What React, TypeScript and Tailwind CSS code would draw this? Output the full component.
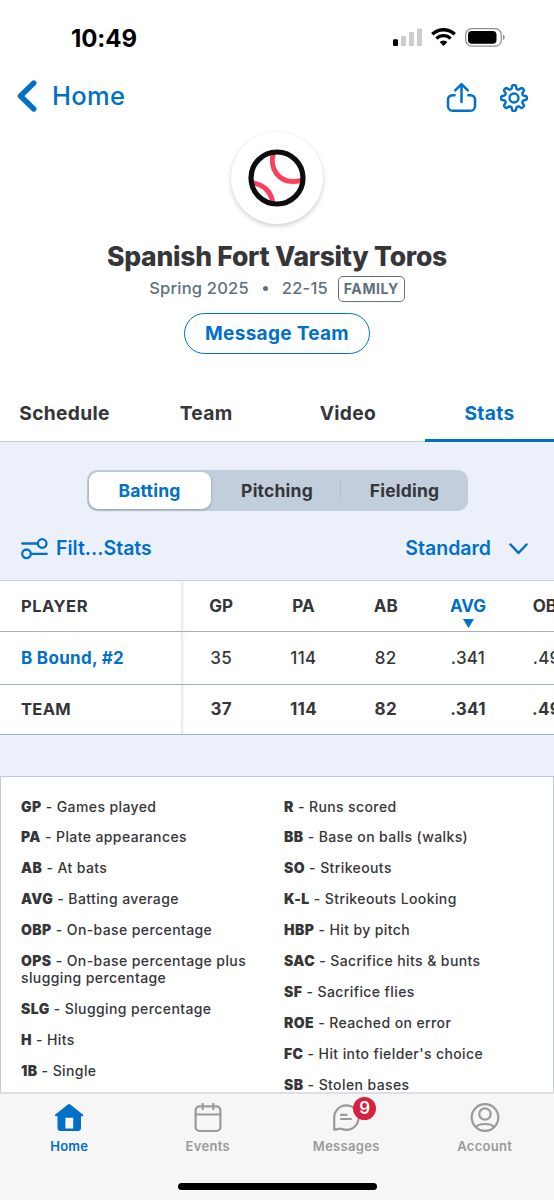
import { useState } from 'react';
import type { ReactNode } from 'react';

const TABS = ['Schedule', 'Team', 'Video', 'Stats'];
const SEGMENTS = ['Batting', 'Pitching', 'Fielding'];

const COLUMNS = ['GP', 'PA', 'AB', 'AVG', 'OBP'];
const ROWS = [
  { name: 'B Bound, #2', isTeam: false, values: ['35', '114', '82', '.341', '.491'] },
  { name: 'TEAM', isTeam: true, values: ['37', '114', '82', '.341', '.491'] },
];

const LEGEND_LEFT = [
  ['GP', 'Games played'],
  ['PA', 'Plate appearances'],
  ['AB', 'At bats'],
  ['AVG', 'Batting average'],
  ['OBP', 'On-base percentage'],
  ['OPS', 'On-base percentage plus slugging percentage'],
  ['SLG', 'Slugging percentage'],
  ['H', 'Hits'],
  ['1B', 'Single'],
];

const LEGEND_RIGHT = [
  ['R', 'Runs scored'],
  ['BB', 'Base on balls (walks)'],
  ['SO', 'Strikeouts'],
  ['K-L', 'Strikeouts Looking'],
  ['HBP', 'Hit by pitch'],
  ['SAC', 'Sacrifice hits & bunts'],
  ['SF', 'Sacrifice flies'],
  ['ROE', 'Reached on error'],
  ['FC', "Hit into fielder's choice"],
  ['SB', 'Stolen bases'],
];

// Outline of an eight-toothed gear centred on (15, 15)
const GEAR_PATH = (() => {
  const points: string[] = [];
  for (let i = 0; i < 240; i++) {
    const a = (i / 240) * Math.PI * 2;
    const r = 11.1 + 1.75 * (Math.tanh(2.2 * Math.cos(8 * a)) / Math.tanh(2.2));
    points.push(`${(15 + r * Math.sin(a)).toFixed(2)} ${(15 - r * Math.cos(a)).toFixed(2)}`);
  }
  return `M${points.join('L')}Z`;
})();

function StatusBar() {
  return (
    <div className="flex h-[74px] shrink-0 items-center justify-between pl-[71px] pr-12 text-black">
      <span className="pt-[3px] text-[24px] font-bold leading-none tracking-[-0.1px]">10:49</span>
      <div className="flex items-center gap-[9px]">
        <svg width="29" height="18" viewBox="0 0 29 18">
          <rect x="0" y="11.3" width="5" height="6.7" rx="1.3" fill="#000" />
          <rect x="8" y="8" width="5" height="10" rx="1.3" fill="#ccc" />
          <rect x="16" y="4" width="5" height="14" rx="1.3" fill="#ccc" />
          <rect x="24" y="0.5" width="5" height="17.5" rx="1.3" fill="#ccc" />
        </svg>
        <svg width="25" height="18" viewBox="0 0 25 18" fill="none" stroke="#000">
          <path d="M1.3 6.3a16 16 0 0 1 22.4 0" strokeWidth="3.5" />
          <path d="M5.4 10.6a10.2 10.2 0 0 1 14.2 0" strokeWidth="3.3" />
          <path d="M12.5 18l-3.9-3.9a5.6 5.6 0 0 1 7.8 0z" fill="#000" stroke="none" />
        </svg>
        <svg width="41" height="19" viewBox="0 0 41 19">
          <rect x="0.7" y="0.7" width="35.6" height="17.4" rx="6" fill="none" stroke="#8f8f8f" strokeWidth="1.3" />
          <rect x="3" y="3" width="28.5" height="12.8" rx="3.8" fill="#000" />
          <path d="M38 6.5c2.2.6 2.2 5 0 5.6z" fill="#8f8f8f" />
        </svg>
      </div>
    </div>
  );
}

function NavHeader() {
  return (
    <div className="flex h-[46px] shrink-0 items-center justify-between pl-[17px] pr-[25px] text-[#0070c9]">
      <button className="flex items-center gap-[15px] pb-[2px]">
        <svg width="20" height="32" viewBox="0 0 20 32" fill="none" stroke="currentColor" strokeWidth="5.4" strokeLinecap="round" strokeLinejoin="round">
          <path d="M16.8 3L3.5 16L16.8 29" />
        </svg>
        <span className="text-[25.5px] font-medium leading-none tracking-[0.3px]">Home</span>
      </button>
      <div className="flex items-center gap-[22px] pt-px">
        <svg width="31" height="31" viewBox="0 0 31 31" fill="none" stroke="currentColor" strokeWidth="2.5" strokeLinecap="round" strokeLinejoin="round">
          <path d="M8.6 13.2H6.4a4.4 4.4 0 0 0-4.4 4.4v6.6a4.6 4.6 0 0 0 4.6 4.6h17.8a4.6 4.6 0 0 0 4.6-4.6v-6.6a4.4 4.4 0 0 0-4.4-4.4h-2.2" />
          <path d="M15.5 20V2.4M9.2 8.4l6.3-6.2 6.3 6.2" />
        </svg>
        <svg width="30" height="30" viewBox="0 0 30 30" fill="none" stroke="currentColor" strokeWidth="2.4" strokeLinejoin="round">
          <path d={GEAR_PATH} />
          <circle cx="15" cy="15" r="4.5" />
        </svg>
      </div>
    </div>
  );
}

function TeamHeader() {
  return (
    <div className="flex shrink-0 flex-col items-center pt-[12px]">
      <div className="flex h-[92px] w-[92px] items-center justify-center rounded-full bg-white shadow-[0_2px_5px_rgba(0,0,0,0.2)]">
        <svg width="58" height="58" viewBox="0 0 58 58" fill="none">
          <path d="M25.6 4C21 17 29 37 53.5 31.5" stroke="#fb3f5c" strokeWidth="5" />
          <path d="M4 34C16 35 24 44 24.5 54" stroke="#fb3f5c" strokeWidth="5" />
          <circle cx="29" cy="29" r="26" stroke="#0b0d0e" strokeWidth="5.2" />
        </svg>
      </div>
      <h1 className="mt-[16px] whitespace-nowrap text-[26.5px] font-extrabold leading-8 tracking-[-0.25px] text-[#35363a]">
        Spanish Fort Varsity Toros
      </h1>
      <div className="mt-[3px] flex h-[27px] items-center text-[16.5px] font-medium text-[#5f7080]">
        <span className="tracking-[0.2px]">Spring 2025</span>
        <span className="mx-[14px] h-[5px] w-[5px] rounded-full bg-[#5f7080]" />
        <span className="tracking-[0.2px]">22-15</span>
        <span className="ml-[10px] flex h-[26px] items-center rounded-[5px] border-[1.5px] border-[#5f7080] px-[5px] text-[14px] font-bold tracking-[0.6px]">
          FAMILY
        </span>
      </div>
      <button className="mt-[11px] h-[41px] w-[186px] rounded-full border-[1.5px] border-[#0070c9] pt-px text-[19px] font-bold tracking-[0.3px] text-[#0070c9]">
        Message Team
      </button>
    </div>
  );
}

function StatsTable() {
  return (
    <div className="mt-[10px] flex shrink-0 overflow-hidden border-t border-[#c5d0de] bg-white text-[17px] text-[#35363a]">
      <div className="w-[182px] shrink-0 border-r border-[#e9ebf4] shadow-[1px_0_3px_#e3e6f3]">
        <div className="flex h-[51px] items-center border-b-[1.5px] border-[#9fb0c4] pl-[21px] text-[16.5px] font-bold tracking-[0.5px]">PLAYER</div>
        {ROWS.map((row) => (
          <div
            key={row.name}
            className={`flex items-center border-b-[1.5px] border-[#9fb0c4] pl-[21px] font-bold ${
              row.isTeam ? 'h-[50px] text-[16.5px] tracking-[0.3px]' : 'h-[53px] pt-[2px] tracking-[0.3px] text-[#0070c9]'
            }`}
          >
            {row.name}
          </div>
        ))}
      </div>
      <div className="-ml-[2px] w-[420px] shrink-0">
        <div className="flex h-[51px] items-center border-b-[1.5px] border-[#9fb0c4] pt-[2px] font-bold">
          {COLUMNS.map((col) => (
            <div key={col} className={`relative w-[82.3px] shrink-0 text-center ${col === 'AVG' ? 'text-[#0070c9]' : ''}`}>
              {col}
              {col === 'AVG' && (
                <svg className="absolute left-[36px] top-[25px]" width="11" height="9" viewBox="0 0 11 9" fill="currentColor">
                  <path d="M0 0h11L5.5 9z" />
                </svg>
              )}
            </div>
          ))}
        </div>
        {ROWS.map((row) => (
          <div
            key={row.name}
            className={`flex items-center border-b-[1.5px] border-[#9fb0c4] tracking-[0.3px] ${row.isTeam ? 'h-[50px] font-bold' : 'h-[53px] pt-[2px] font-medium'}`}
          >
            {row.values.map((value, i) => (
              <div key={i} className="w-[82.3px] shrink-0 text-center">{value}</div>
            ))}
          </div>
        ))}
      </div>
    </div>
  );
}

function LegendColumn({ items }: { items: string[][] }) {
  return (
    <div className="flex flex-1 flex-col gap-[13.9px]">
      {items.map(([abbr, label]) => (
        <p key={abbr}>
          <span className="font-black">{abbr}</span> - {label}
        </p>
      ))}
    </div>
  );
}

function NavItem({ label, active, children }: { label: string; active?: boolean; children: ReactNode }) {
  return (
    <button className={`flex flex-col items-center ${active ? 'text-[#0070c9]' : 'text-[#9a9a9a]'}`}>
      <span className="relative">{children}</span>
      <span className="mt-[5px] text-[13px] font-semibold leading-4 tracking-[0.3px]">{label}</span>
    </button>
  );
}

function BottomNav() {
  return (
    <div className="flex h-[108px] shrink-0 flex-col items-center border-t-2 border-[#dedfe2] bg-[#f6f6f7]">
      <div className="grid w-full grid-cols-4 pt-[8px]">
        <NavItem label="Home" active>
          <svg width="30" height="31" viewBox="0 0 30 31" fill="currentColor">
            <path fillRule="evenodd" d="M14 2.4a1.8 1.8 0 0 1 2.2 0L28.9 12.4a1 1 0 0 1-.6 1.8H27V26a3 3 0 0 1-3 3H6.5a3 3 0 0 1-3-3V14.2H1.9a1 1 0 0 1-.6-1.800zM11.400 15.800V26.600h7.800V15.800z" />
          </svg>
        </NavItem>
        <NavItem label="Events">
          <svg width="30" height="31" viewBox="0 0 30 31" fill="none" stroke="currentColor" strokeWidth="2.2" strokeLinecap="round">
            <rect x="2.6" y="4.4" width="24.8" height="24.6" rx="4" />
            <path d="M2.6 12.5h24.8M9.7 1.8v5.4M20.3 1.8v5.4" />
          </svg>
        </NavItem>
        <NavItem label="Messages">
          <svg width="30" height="31" viewBox="0 0 30 31" fill="none" stroke="currentColor" strokeWidth="2.2" strokeLinecap="round" strokeLinejoin="round">
            <path d="M3.2 27.6V15.6A12.2 12.2 0 1 1 15.4 27.8C12.5 27.8 10.5 26.6 8.8 26.7C7 26.8 5.5 27.8 3.2 27.6Z" />
            <path d="M10 12.8h5.5M10 17h10" />
          </svg>
          <span className="absolute -top-[5px] left-[22px] flex h-[23px] w-[23px] items-center justify-center rounded-full bg-[#d6213f] text-[17px] font-semibold leading-none text-white">
            9
          </span>
        </NavItem>
        <NavItem label="Account">
          <svg width="30" height="31" viewBox="0 0 30 31" fill="none" stroke="currentColor" strokeWidth="2.2">
            <circle cx="15" cy="15.5" r="13.3" />
            <circle cx="15" cy="12" r="5.7" />
            <path d="M6.2 25c1.6-2.6 4.6-3 8.8-3s7.2.4 8.8 3" />
          </svg>
        </NavItem>
      </div>
      <div className="mt-auto mb-[10px] h-[7px] w-[199px] rounded-full bg-black" />
    </div>
  );
}

export default function App() {
  const [tab, setTab] = useState('Stats');
  const [segment, setSegment] = useState('Batting');

  return (
    <div className="flex h-[1200px] w-[554px] flex-col overflow-hidden bg-white font-['Inter',sans-serif] text-[#35363a]">
      <StatusBar />
      <NavHeader />
      <TeamHeader />

      <div className="mt-[31px] grid h-[57px] shrink-0 grid-cols-4 gap-x-[12.67px] border-b border-[#c5d0de]">
        {TABS.map((name) => (
          <button
            key={name}
            onClick={() => setTab(name)}
            className={`-mb-px border-b-[3px] pt-[2px] text-[19.2px] font-bold tracking-[0.3px] ${
              tab === name ? 'border-[#0070c9] text-[#0070c9]' : 'border-transparent'
            }`}
          >
            {name}
          </button>
        ))}
      </div>

      <div className="flex min-h-0 flex-1 flex-col bg-[#ebf0fa]">
        <div className="mx-auto mt-[28px] grid h-[41px] w-[381px] shrink-0 grid-cols-3 gap-x-[5.5px] rounded-[10px] bg-[#c2cedb] p-[2px]">
          {SEGMENTS.map((name, i) => (
            <button
              key={name}
              onClick={() => setSegment(name)}
              className={`relative pt-px text-[17.5px] font-bold tracking-[0.2px] ${
                segment === name ? 'rounded-[9px] bg-white text-[#0070c9] shadow-[0_1px_3px_rgba(0,0,0,0.25)]' : ''
              }`}
            >
              {name}
              {i === 2 && <span className="absolute -left-[4px] top-[7px] h-[23px] w-px bg-[#b3c0ce]" />}
            </button>
          ))}
        </div>

        <div className="mt-[16px] flex h-[43px] shrink-0 items-center justify-between pl-[21px] pr-[26px] text-[19.5px] font-semibold text-[#0070c9]">
          <button className="flex items-center gap-[8px]">
            <svg width="27" height="22" viewBox="0 0 27 22" fill="none" stroke="currentColor" strokeWidth="2.3" strokeLinecap="round">
              <circle cx="21.2" cy="5.5" r="4.3" />
              <circle cx="5.5" cy="15.8" r="4.3" />
              <path d="M1.2 5.5h15.7M9.8 15.8h16" />
            </svg>
            Filt...Stats
          </button>
          <button className="flex items-center gap-[18px]">
            Standard
            <svg width="19" height="12" viewBox="0 0 19 12" fill="none" stroke="currentColor" strokeWidth="2.5" strokeLinecap="round" strokeLinejoin="round">
              <path d="M1.5 1.5l8 8.5 8-8.5" />
            </svg>
          </button>
        </div>

        <StatsTable />

        <div className="mt-[41px] flex min-h-0 flex-1 gap-[14px] overflow-hidden border border-b-0 border-[#bccbdc] bg-white px-[20px] pt-[20.5px] text-[14px] font-medium leading-[17px] tracking-[0.4px]">
          <LegendColumn items={LEGEND_LEFT} />
          <LegendColumn items={LEGEND_RIGHT} />
        </div>
      </div>

      <BottomNav />
    </div>
  );
}
